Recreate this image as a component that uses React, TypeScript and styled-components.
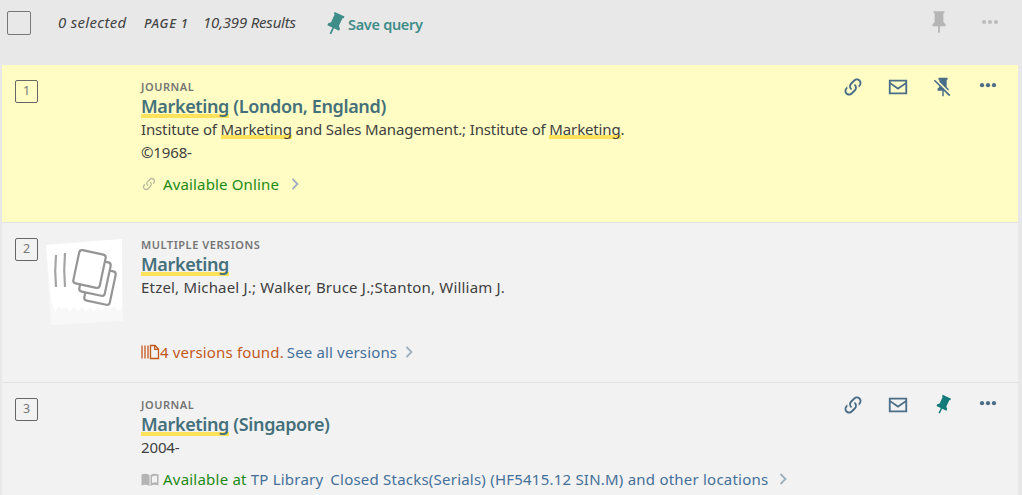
import React from "react";
import styled, { createGlobalStyle } from "styled-components";

const GlobalStyle = createGlobalStyle`
  html, body {
    margin: 0;
    height: 100%;
    overflow: hidden;
    background: #e8e8e8;
    font-family: "Noto Sans", "Liberation Sans", sans-serif;
  }
`;

const Page = styled.div`
  width: 1022px;
  height: 495px;
  overflow: hidden;
  background: #e8e8e8;
  color: #3a3a3a;
`;

const Toolbar = styled.div`
  height: 65px;
  display: flex;
  align-items: flex-start;
  padding: 11px 21px 0 7px;
  box-sizing: border-box;
`;

const SelectAll = styled.div`
  width: 22px;
  height: 22px;
  border: 1px solid #777;
  border-radius: 2px;
  margin-right: 27px;
`;

const ToolbarText = styled.span<{ $width: number; $tracking: number }>`
  width: ${({ $width }) => $width}px;
  font-size: 15px;
  line-height: 22px;
  font-style: italic;
  letter-spacing: ${({ $tracking }) => $tracking}px;
  color: #444;
  white-space: nowrap;
`;

const PageLabel = styled(ToolbarText)`
  font-size: 13px;
  font-weight: 500;
  padding-top: 1px;
`;

const SaveQuery = styled.span`
  display: flex;
  align-items: center;
  height: 25px;
  font-size: 14.5px;
  font-weight: 600;
  letter-spacing: -0.3px;
  color: #3f8d89;
`;

const ToolbarEnd = styled.div`
  margin: -1px 0 0 auto;
  display: flex;
  align-items: center;
  gap: 27px;
  height: 24px;
`;

const ResultList = styled.div`
  margin: 0 4px 0 2px;
`;

const Result = styled.div<{ $height: number; $active?: boolean }>`
  height: ${({ $height }) => $height}px;
  box-sizing: border-box;
  display: grid;
  grid-template-columns: 44px 95px 1fr auto;
  background: ${({ $active }) => ($active ? "#fffdc4" : "#f2f2f2")};
  border-bottom: 1px solid #e2e2e2;
`;

const IndexCell = styled.div`
  padding: 15px 0 0 13px;
`;

const IndexBox = styled.div`
  width: 21px;
  height: 21px;
  border: 1px solid #666;
  border-radius: 2px;
  font-size: 12.5px;
  line-height: 19px;
  text-align: center;
  color: #777;
`;

const Thumb = styled.div`
  padding-top: 16px;
`;

const Body = styled.div`
  padding-top: 14px;
  display: flex;
  flex-direction: column;
  min-width: 0;
`;

const TypeLabel = styled.div`
  font-size: 11px;
  line-height: 16px;
  font-weight: 600;
  letter-spacing: 0.55px;
  color: #757575;
`;

const Title = styled.div`
  font-size: 18px;
  line-height: 24px;
  font-weight: 600;
  letter-spacing: -0.37px;
  color: #44707b;
  margin-top: -1px;
`;

const Hit = styled.span`
  background: linear-gradient(#ffe25b, #ffe25b) 0 100% / 100% 4px no-repeat;
`;

const Line = styled.div<{ $tracking?: number }>`
  font-size: 15px;
  line-height: 23px;
  letter-spacing: ${({ $tracking }) => $tracking ?? -0.14}px;
  color: #3f3f3f;
`;

const Status = styled.div<{ $top: number; $tracking?: number }>`
  display: flex;
  align-items: center;
  height: 22px;
  margin-top: ${({ $top }) => $top}px;
  font-size: 15px;
  letter-spacing: ${({ $tracking }) => $tracking ?? 0.15}px;
  white-space: nowrap;
`;

const Green = styled.span`
  color: #1c8a14;
`;

const Orange = styled.span`
  color: #c2591b;
`;

const Blue = styled.span`
  color: #44709a;
`;

const Actions = styled.div`
  display: flex;
  gap: 23px;
  padding: 11px 19px 0 0;
  align-items: flex-start;
`;

const Space = styled.span<{ $w: number }>`
  display: inline-block;
  flex: none;
  width: ${({ $w }) => $w}px;
`;

const Glyph = styled.svg<{ $color: string; $size?: number }>`
  display: block;
  flex: none;
  width: ${({ $size }) => $size ?? 22}px;
  height: ${({ $size }) => $size ?? 22}px;
  fill: ${({ $color }) => $color};
`;

const PIN = "M16,12V4H17V2H7V4H8V12L6,14V16H11.2V22H12.8V16H18V14L16,12Z";
const PIN_OFF =
  "M2,5.27L3.28,4L20,20.72L18.73,22L12.8,16.1V22H11.2V16H6V14L8,12V11.27L2,5.27M16,12L18,14V16H17.82L8,6.18V4H7V2H17V4H16V12Z";
const LINK =
  "M10.59,13.41C11,13.8 11,14.44 10.59,14.83C10.2,15.22 9.56,15.22 9.17,14.83C7.22,12.88 7.22,9.71 9.17,7.76L12.71,4.22C14.66,2.27 17.83,2.27 19.78,4.22C21.73,6.17 21.73,9.34 19.78,11.29L18.29,12.78C18.3,11.96 18.17,11.14 17.89,10.36L18.36,9.88C19.54,8.71 19.54,6.81 18.36,5.64C17.19,4.46 15.29,4.46 14.12,5.64L10.59,9.17C9.41,10.34 9.41,12.24 10.59,13.41M13.41,9.17C13.8,8.78 14.44,8.78 14.83,9.17C16.78,11.12 16.78,14.29 14.83,16.24L11.29,19.78C9.34,21.73 6.17,21.73 4.22,19.78C2.27,17.83 2.27,14.66 4.22,12.71L5.71,11.22C5.7,12.04 5.83,12.86 6.11,13.65L5.64,14.12C4.46,15.29 4.46,17.19 5.64,18.36C6.81,19.54 8.71,19.54 9.88,18.36L13.41,14.83C14.59,13.66 14.59,11.76 13.41,10.59C13,10.2 13,9.56 13.41,9.17Z";
const MAIL = "M2,4H22V20H2V4M20,6H4V7L12,12.5L20,7V6M20,9.4L12,14.9L4,9.4V18H20V9.4Z";

const SLATE = "#4a6d88";

const Icon = ({ d, color, size, tilt }: { d: string; color: string; size?: number; tilt?: number }) => (
  <Glyph viewBox="0 0 24 24" $color={color} $size={size}>
    <path d={d} transform={tilt ? `rotate(${tilt} 12 12)` : undefined} />
  </Glyph>
);

const Dots = ({ color, cy = 10 }: { color: string; cy?: number }) => (
  <Glyph viewBox="0 0 24 24" $color={color}>
    <circle cx="5.5" cy={cy} r="2.3" />
    <circle cx="12" cy={cy} r="2.3" />
    <circle cx="18.5" cy={cy} r="2.3" />
  </Glyph>
);

const Chevron = () => (
  <svg width="10" height="14" viewBox="0 0 10 14" fill="none" stroke="#9db0bd" strokeWidth="1.8">
    <path d="M2.5 2l5 5-5 5" />
  </svg>
);

const VersionsIcon = () => (
  <svg width="19" height="16" viewBox="0 0 19 16" fill="none" stroke="#c2591b" strokeWidth="1.3">
    <path d="M1 1.500v13M4 1.500v13M7 1.500v13M9.500 1.500h4.500l3.500 3.500v9.500h-8zM13.700 1.500v3.800h3.800" />
  </svg>
);

const BookIcon = () => (
  <svg width="18" height="14" viewBox="0 0 18 14" fill="#b4b4b4">
    <path d="M0.500 2.500c3-1 5.500-1 8 .5v11c-2.500-1.500-5-1.500-8-.5z" />
    <path d="M9.500 3c2.500-1.500 5-1.500 8-.5v11c-3-1-5.500-1-8 .5zM11 4.500v6.500c1.500-.7 3-.9 5-.6V3.800c-2-.3-3.500 0-5 .7z" fillRule="evenodd" />
  </svg>
);

const VersionsThumb = () => (
  <svg width="78" height="86" viewBox="0 0 78 86">
    <defs>
      <filter id="soft">
        <feGaussianBlur stdDeviation="0.5" />
      </filter>
    </defs>
    <g filter="url(#soft)">
      <path d="M0 6 76 0 77 82 5 86z" fill="#f8f8f8" />
      <path
        d="M0 6 76 0 76 68 72 72 68 67 64 72 60 67 56 72 52 68 48 73 44 68 40 73 36 68 32 72 28 68 24 73 20 68 16 70 12 68 9 74 5 60z"
        fill="#fff"
      />
      <g fill="none" stroke="#959595" strokeWidth="2.2" strokeLinejoin="round">
        <path d="M10 16c-1 10-1 22 0 32M19 14c-1 11-1 23 0 34" stroke="#a4a4a4" />
        <rect x="41" y="30" width="26" height="34" rx="3" transform="rotate(12 54 47)" fill="#fff" />
        <rect x="36" y="21" width="26" height="34" rx="3" transform="rotate(12 49 38)" fill="#fff" />
        <rect x="30" y="13" width="27" height="34" rx="3" transform="rotate(12 43.500 30)" fill="#fff" />
      </g>
    </g>
  </svg>
);

const RowActions = ({ pinned }: { pinned: boolean }) => (
  <Actions>
    <Icon d={LINK} color={SLATE} />
    <Icon d={MAIL} color={SLATE} />
    {pinned ? <Icon d={PIN} color="#127a78" tilt={25} /> : <Icon d={PIN_OFF} color={SLATE} />}
    <Dots color={SLATE} />
  </Actions>
);

export default function App() {
  return (
    <Page>
      <GlobalStyle />
      <Toolbar>
        <SelectAll />
        <ToolbarText $width={86} $tracking={0.3}>0 selected</ToolbarText>
        <PageLabel $width={59} $tracking={0.7}>PAGE 1</PageLabel>
        <ToolbarText $width={119} $tracking={-0.2}>10,399 Results</ToolbarText>
        <SaveQuery>
          <Icon d={PIN} color="#3f8d89" size={26} tilt={25} />
          Save query
        </SaveQuery>
        <ToolbarEnd>
          <Icon d={PIN} color="#b5b5b5" size={26} />
          <Dots color="#bcbcbc" cy={12} />
        </ToolbarEnd>
      </Toolbar>
      <ResultList>
        <Result $height={158} $active>
          <IndexCell>
            <IndexBox>1</IndexBox>
          </IndexCell>
          <Thumb />
          <Body>
            <TypeLabel>JOURNAL</TypeLabel>
            <Title>
              <Hit>Marketing</Hit> (London, England)
            </Title>
            <Line>
              Institute of <Hit>Marketing</Hit> and Sales Management.; Institute of <Hit>Marketing</Hit>.
            </Line>
            <Line>©1968-</Line>
            <Status $top={9}>
              <Icon d={LINK} color="#b9b9a0" size={16} />
              <Space $w={6} />
              <Green>Available Online</Green>
              <Space $w={11} />
              <Chevron />
            </Status>
          </Body>
          <RowActions pinned={false} />
        </Result>
        <Result $height={160}>
          <IndexCell>
            <IndexBox>2</IndexBox>
          </IndexCell>
          <Thumb>
            <VersionsThumb />
          </Thumb>
          <Body>
            <TypeLabel>MULTIPLE VERSIONS</TypeLabel>
            <Title>
              <Hit>Marketing</Hit>
            </Title>
            <Line $tracking={0.19}>Etzel, Michael J.; Walker, Bruce J.;Stanton, William J.</Line>
            <Status $top={42}>
              <VersionsIcon />
              <Orange>4 versions found.</Orange>
              <Space $w={3} />
              <Blue>See all versions</Blue>
              <Space $w={7} />
              <Chevron />
            </Status>
          </Body>
          <div />
        </Result>
        <Result $height={120}>
          <IndexCell>
            <IndexBox>3</IndexBox>
          </IndexCell>
          <Thumb />
          <Body>
            <TypeLabel>JOURNAL</TypeLabel>
            <Title>
              <Hit>Marketing</Hit> (Singapore)
            </Title>
            <Line>2004-</Line>
            <Status $top={9} $tracking={0.22}>
              <BookIcon />
              <Space $w={4} />
              <Green>Available at</Green>
              <Space $w={4} />
              <Blue>TP Library</Blue>
              <Space $w={7} />
              <Blue>Closed Stacks(Serials) (HF5415.12 SIN.M) and other locations</Blue>
              <Space $w={10} />
              <Chevron />
            </Status>
          </Body>
          <RowActions pinned />
        </Result>
      </ResultList>
    </Page>
  );
}
